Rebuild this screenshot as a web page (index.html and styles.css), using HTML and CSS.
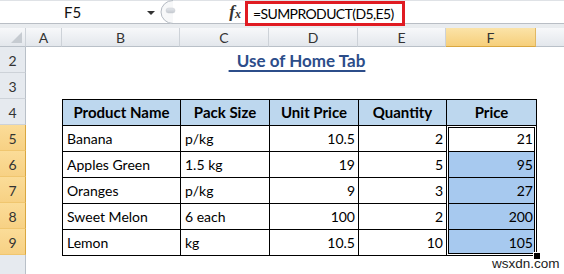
FILE: index.html
```html
<!DOCTYPE html>
<html>
<head>
<meta charset="utf-8">
<link rel="stylesheet" href="styles.css">
</head>
<body>
<div class="app">
  <div class="fbar">
    <div class="namebox"><span class="nb-text">F5</span><span class="dd"></span></div>
    <div class="grip">
      <svg width="24" height="24" viewBox="0 0 24 24">
        <defs>
          <linearGradient id="gp" x1="0" y1="0" x2="0" y2="1">
            <stop offset="0" stop-color="#e4e7eb"/>
            <stop offset="1" stop-color="#c3c8cf"/>
          </linearGradient>
        </defs>
        <path d="M13 0.5 A12 11.5 0 0 0 13 23.5" fill="#f7f8f9" stroke="#b4bac2" stroke-width="1"/>
        <rect x="6" y="8" width="9" height="5" rx="2.5" fill="url(#gp)" stroke="#c9cdd3" stroke-width="0.5"/>
      </svg>
    </div>
    <div class="fx"><span class="fx-f">f</span><span class="fx-x">x</span></div>
    <div class="formula"><span class="hl">=SUMPRODUCT(D5,E5)</span></div>
  </div>
  <div class="strip"></div>
  <div class="sheet">
    <div class="ch corner"><span class="tri"></span></div>
    <div class="ch">A</div>
    <div class="ch">B</div>
    <div class="ch">C</div>
    <div class="ch">D</div>
    <div class="ch">E</div>
    <div class="ch sel">F</div>
    <div class="ch last"></div>

    <div class="rowheads">
      <div class="rh">2</div>
      <div class="rh">3</div>
      <div class="rh">4</div>
      <div class="rh sel">5</div>
      <div class="rh sel">6</div>
      <div class="rh sel">7</div>
      <div class="rh sel">8</div>
      <div class="rh sel">9</div>
      <div class="rh"></div>
    </div>

    <div class="title"><span class="title-text">&nbsp;&nbsp;Use of Home Tab</span></div>

    <div class="tbl">
      <div class="c th">Product Name</div>
      <div class="c th">Pack Size</div>
      <div class="c th">Unit Price</div>
      <div class="c th">Quantity</div>
      <div class="c th">Price</div>

      <div class="c">Banana</div>
      <div class="c">p/kg</div>
      <div class="c num">10.5</div>
      <div class="c num">2</div>
      <div class="c num active">21</div>

      <div class="c">Apples Green</div>
      <div class="c">1.5 kg</div>
      <div class="c num">19</div>
      <div class="c num">5</div>
      <div class="c num hi">95</div>

      <div class="c">Oranges</div>
      <div class="c">p/kg</div>
      <div class="c num">9</div>
      <div class="c num">3</div>
      <div class="c num hi">27</div>

      <div class="c">Sweet Melon</div>
      <div class="c">6 each</div>
      <div class="c num">100</div>
      <div class="c num">2</div>
      <div class="c num hi">200</div>

      <div class="c">Lemon</div>
      <div class="c">kg</div>
      <div class="c num">10.5</div>
      <div class="c num">10</div>
      <div class="c num hi">105</div>

      <div class="selbox"><span class="handle"></span></div>
    </div>
  </div>
  <div class="wm">wsxdn.com</div>
</div>
</body>
</html>
```

FILE: styles.css
```css
* { box-sizing: border-box; }
html, body { margin: 0; padding: 0; background: #fff; }
body { width: 564px; height: 274px; overflow: hidden; font-family: "Lato", "Liberation Sans", sans-serif; }

.app { width: 564px; height: 274px; overflow: hidden; position: relative; }

.fbar {
  height: 24px;
  display: flex;
  align-items: stretch;
  background: #fff;
  border-top: 1px solid #dfe2e6;
  border-bottom: 1px solid #b9bec5;
  position: relative;
  z-index: 2;
}
.namebox {
  width: 160px;
  display: flex;
  align-items: center;
  position: relative;
}
.nb-text {
  font-size: 15px;
  color: #111;
  margin-left: 64px;
}
.dd {
  position: absolute;
  left: 147px;
  top: 10px;
  width: 0; height: 0;
  border-left: 4px solid transparent;
  border-right: 4px solid transparent;
  border-top: 4px solid #333;
}
.grip { width: 24px; display: flex; align-items: center; }
.grip svg { display: block; margin-top: -1px; }
.fx {
  width: 61px;
  display: flex;
  align-items: center;
  justify-content: flex-end;
  padding-right: 4px;
  font-family: "Liberation Serif", serif;
  font-style: italic;
  font-weight: bold;
  color: #333;
}
.fx-f { font-size: 17px; }
.fx-x { font-size: 12px; margin-top: 4px; }
.formula { flex: 1; display: flex; align-items: flex-start; }
.hl {
  display: inline-flex;
  align-items: center;
  height: 25px;
  width: 160px;
  padding-left: 5px;
  border: 3px solid #e01b22;
  font-size: 14px;
  letter-spacing: -0.6px;
  color: #000;
  position: relative;
  z-index: 3;
  white-space: nowrap;
  overflow: hidden;
}

.strip { height: 4px; background: #e9ecef; }

.sheet {
  display: grid;
  grid-template-columns: 26px 36px 118px 89px 89px 88px 90px 28px;
  grid-template-rows: 19px repeat(9, 26px);
}

.ch {
  background: linear-gradient(#f7f8fa, #e3e7ec);
  border-right: 1px solid #cdd2d8;
  border-bottom: 1px solid #b9c0c8;
  font-size: 14px;
  color: #333;
  display: flex;
  align-items: center;
  justify-content: center;
}
.ch.sel {
  background: linear-gradient(#fbe3a8, #f6cf7b);
  border-right-color: #e1b864;
  border-bottom-color: #d9a740;
}
.ch.last { border-right: none; }
.corner { position: relative; }
.tri {
  position: absolute;
  right: 3px;
  bottom: 3px;
  width: 0; height: 0;
  border-left: 11px solid transparent;
  border-bottom: 11px solid #c6cbd1;
}

.rowheads {
  grid-column: 1;
  grid-row: 2 / 11;
  display: flex;
  flex-direction: column;
}
.rh {
  height: 26px;
  flex: none;
  background: #e6eaef;
  border-right: 1px solid #b9c0c8;
  border-bottom: 1px solid #cdd2d8;
  font-size: 14px;
  color: #333;
  display: flex;
  align-items: center;
  justify-content: center;
  padding-top: 2px;
}
.rh.sel {
  background: linear-gradient(#fbdc98, #f7d184);
  border-right-color: #d9a740;
  border-bottom-color: #f0c66f;
}

.title {
  grid-column: 3 / 8;
  grid-row: 2;
  display: flex;
  align-items: center;
  justify-content: center;
  padding-top: 1px;
  padding-right: 4px;
}
.title-text {
  font-size: 17px;
  font-weight: bold;
  color: #2c4d8a;
  text-decoration: underline;
  text-decoration-thickness: 1.5px;
  text-underline-offset: 3px;
  white-space: pre;
}

.tbl {
  grid-column: 3 / 8;
  grid-row: 4 / 10;
  width: 475px;
  height: 157px;
  display: grid;
  grid-template-columns: 118px 89px 89px 88px 90px;
  grid-template-rows: repeat(6, 26px);
  border-right: 1px solid #000;
  border-bottom: 1px solid #000;
  position: relative;
}
.c {
  border-left: 1px solid #000;
  border-top: 1px solid #000;
  font-size: 14px;
  color: #000;
  display: flex;
  align-items: flex-end;
  padding: 0 3px 4px 4px;
  white-space: nowrap;
}
.c.th {
  background: #bdd7ee;
  font-weight: bold;
  font-size: 15px;
  justify-content: center;
  padding-left: 0;
  padding-right: 0;
}
.c.num { justify-content: flex-end; }
.c.hi { background: #a7c9ef; }
.c.active { background: #fff; }

.selbox {
  position: absolute;
  left: 384px;
  top: 26px;
  width: 91px;
  height: 131px;
  border: 1px solid #000;
  box-shadow: inset 0 0 0 1px #fff, inset 0 0 0 2px #000;
  pointer-events: none;
}
.handle {
  position: absolute;
  right: -4px;
  bottom: -4px;
  width: 6px;
  height: 6px;
  background: #000;
  outline: 1px solid #fff;
}

.wm {
  position: absolute;
  left: 492px;
  top: 256px;
  font-family: "Liberation Sans", Arial, sans-serif;
  font-size: 13.5px;
  color: #222;
  white-space: nowrap;
}
```
